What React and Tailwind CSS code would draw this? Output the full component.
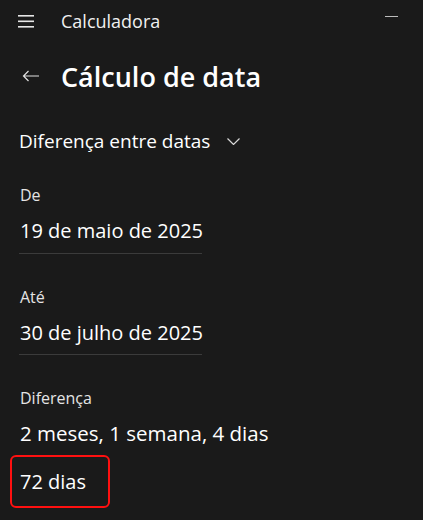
import React from "react";

const font = { fontFamily: '"Open Sans", "Noto Sans", sans-serif' };

export default function App() {
  return (
    <div
      className="w-[423px] h-[520px] bg-[#1a1a1a] text-white overflow-hidden flex flex-col"
      style={font}
    >
      {/* top bar */}
      <div className="h-[42px] flex items-center relative">
        <div className="w-[61px] pl-[18px] flex">
          <svg width="16" height="13" viewBox="0 0 16 13">
            <rect x="0" y="0" width="16" height="1.6" fill="#e6e6e6" />
            <rect x="0" y="5.5" width="16" height="1.6" fill="#e6e6e6" />
            <rect x="0" y="11" width="16" height="1.6" fill="#e6e6e6" />
          </svg>
        </div>
        <span className="text-[18px] leading-none text-[#f0f0f0]">Calculadora</span>
        <div className="absolute left-[385px] top-[16px] w-[13px] h-px bg-[#bdbdbd]" />
      </div>

      {/* title */}
      <div className="h-[68px] flex items-center">
        <div className="w-[61px] pl-[22px] flex">
          <svg width="18" height="12" viewBox="0 0 18 12" fill="none" stroke="#e0e0e0" strokeWidth="1.2">
            <path d="M17 6H1.5M6.5 1L1.5 6l5 5" />
          </svg>
        </div>
        <span className="text-[27px] font-semibold leading-none">Cálculo de data</span>
      </div>

      {/* mode selector */}
      <div className="mt-[20px] pl-[19px] flex items-center h-[22px]">
        <span className="text-[19px] leading-none">Diferença entre datas</span>
        <svg className="ml-[17px]" width="13" height="7" viewBox="0 0 13 7" fill="none" stroke="#d8d8d8" strokeWidth="1.2">
          <path d="M0.5 0.5L6.5 6.5L12.5 0.5" />
        </svg>
      </div>

      {/* De */}
      <div className="mt-[35px] pl-[20px] text-[16px] leading-none text-[#e4e4e4] h-[16px] flex items-center">De</div>
      <div className="mt-[17px] pl-[20px] text-[20px] leading-none h-[22px] flex items-center">19 de maio de 2025</div>
      <div className="mt-[11px] ml-[19px] w-[183px] h-px bg-[#3b3b3b]" />

      {/* Até */}
      <div className="mt-[35px] pl-[20px] text-[16px] leading-none text-[#e4e4e4] h-[16px] flex items-center">Até</div>
      <div className="mt-[17px] pl-[20px] text-[20px] leading-none h-[22px] flex items-center">30 de julho de 2025</div>
      <div className="mt-[10px] ml-[19px] w-[183px] h-px bg-[#3b3b3b]" />

      {/* Diferença */}
      <div className="mt-[35px] pl-[20px] text-[16px] leading-none text-[#e4e4e4] h-[16px] flex items-center">Diferença</div>
      <div className="mt-[16px] pl-[20px] text-[20.5px] leading-none h-[22px] flex items-center">2 meses, 1 semana, 4 dias</div>
      <div className="mt-[11px] ml-[10px] w-[100px] h-[53px] border-2 border-[#ff1010] rounded-[6px] flex items-center pl-[8px]">
        <span className="text-[20px] leading-none">72 dias</span>
      </div>
    </div>
  );
}
